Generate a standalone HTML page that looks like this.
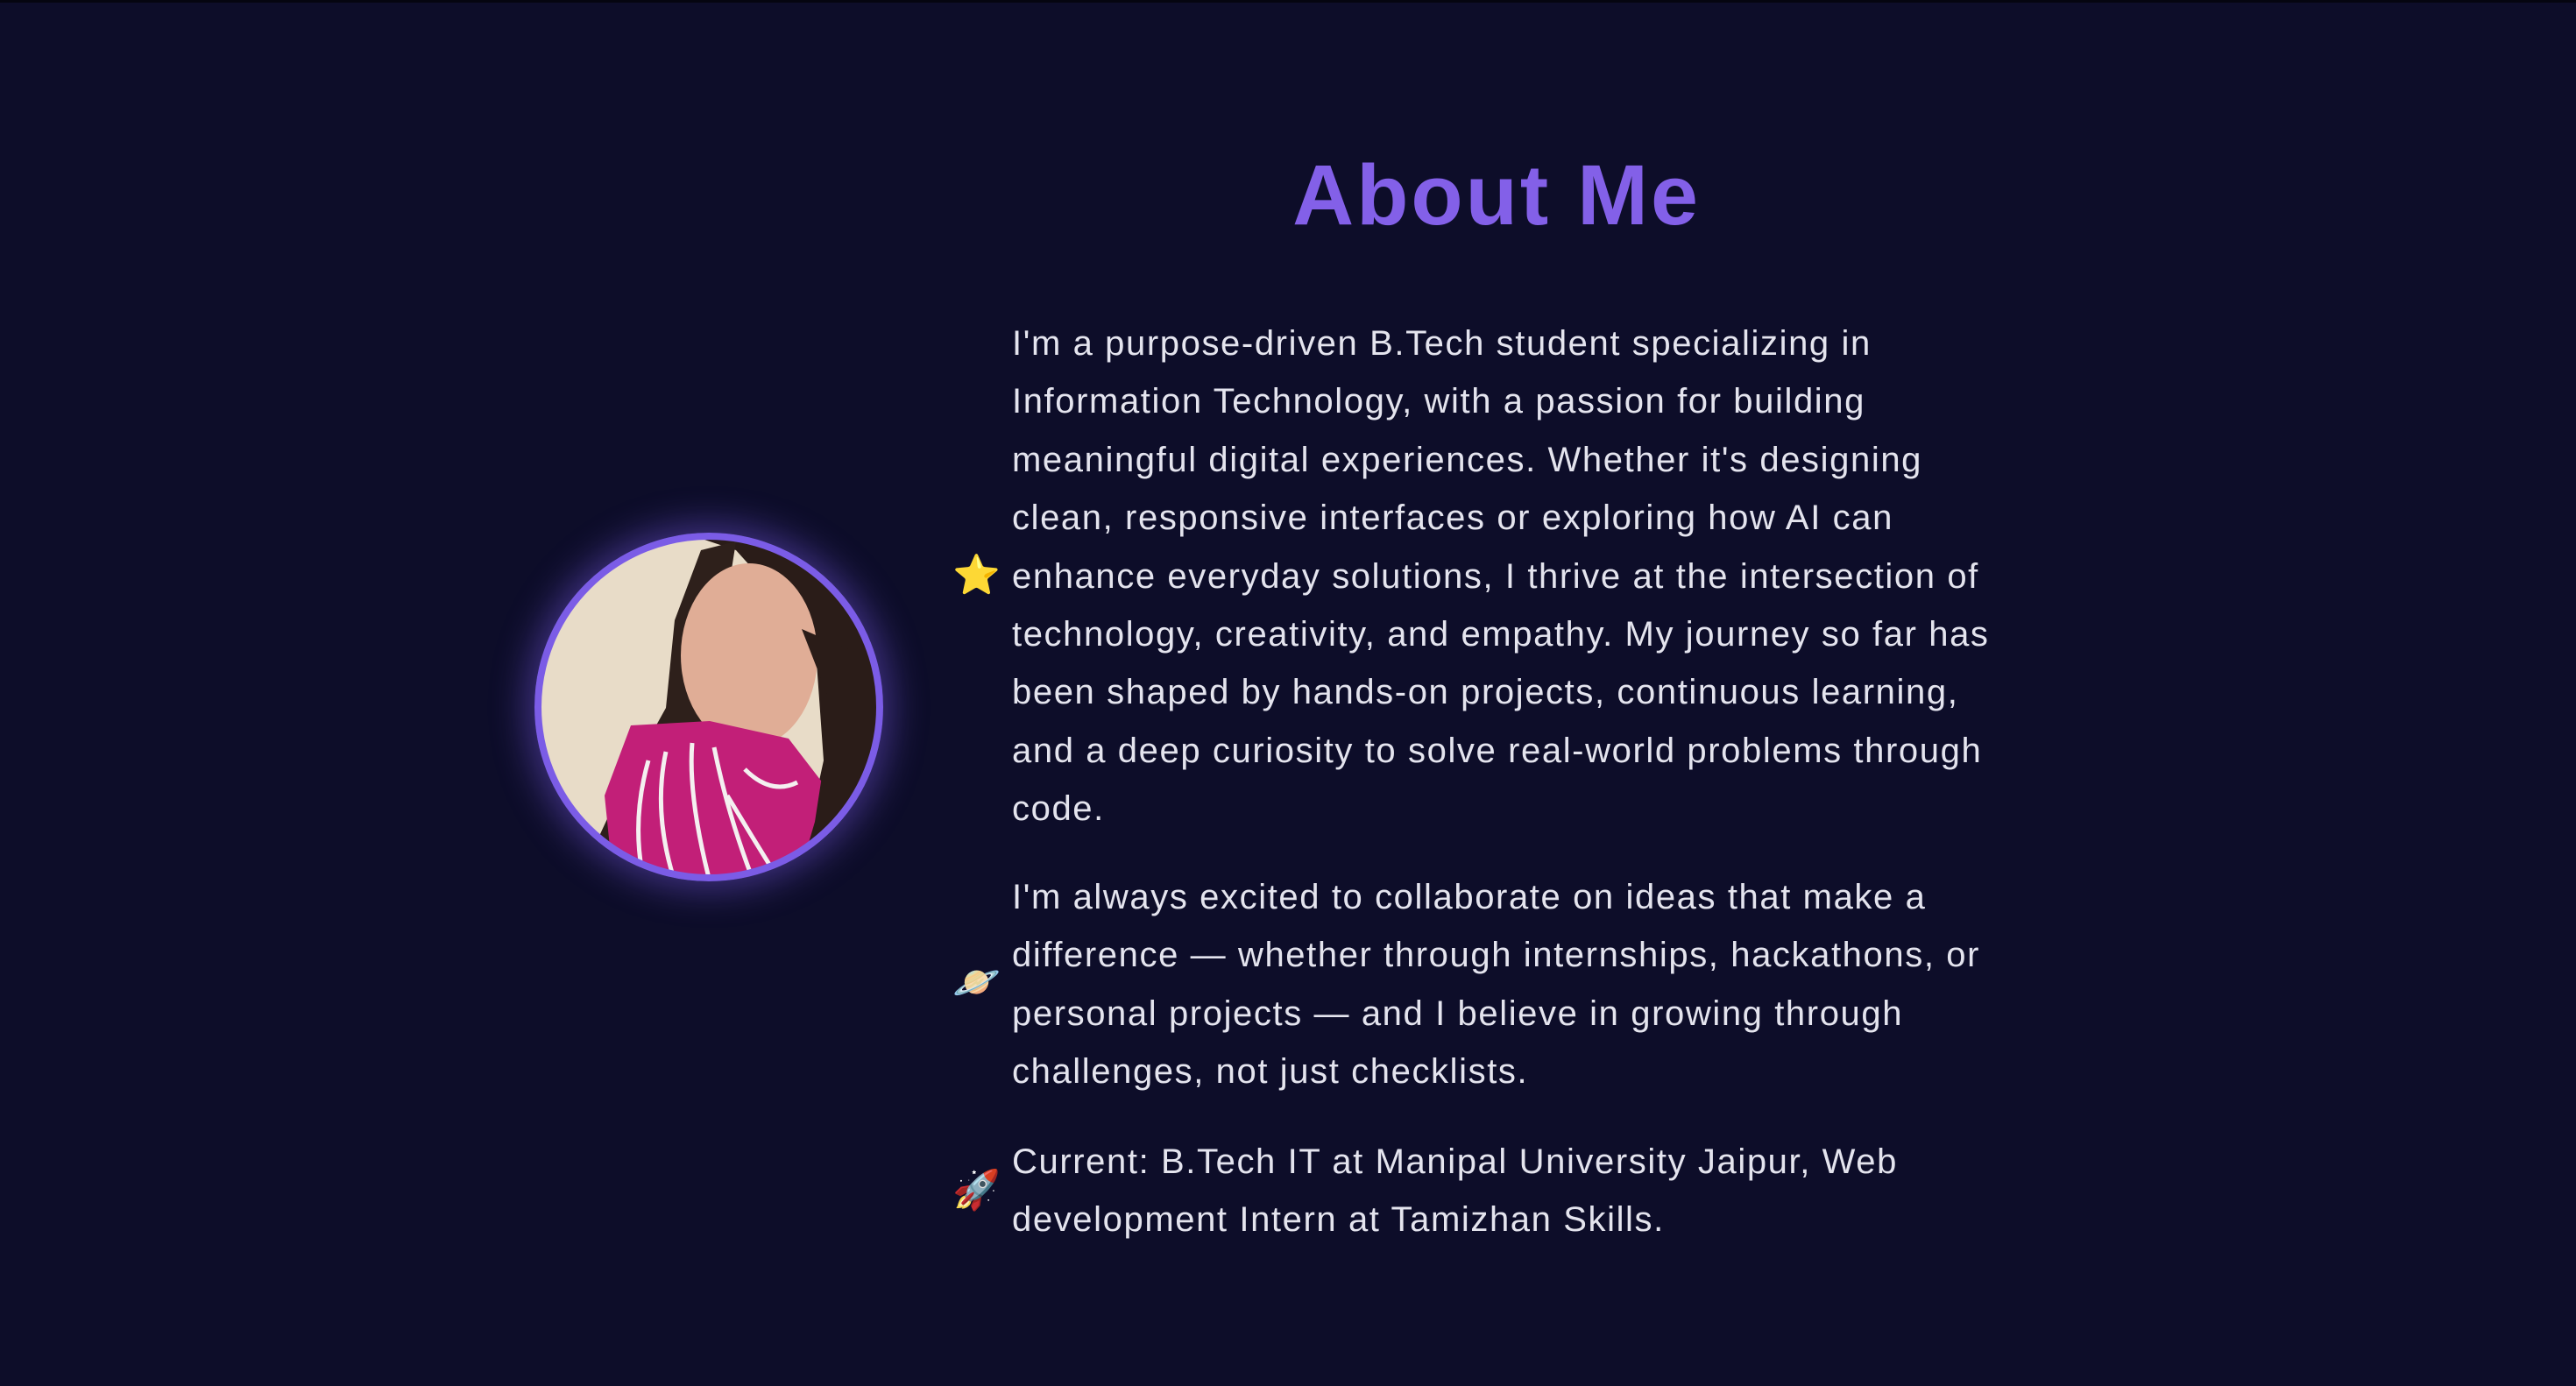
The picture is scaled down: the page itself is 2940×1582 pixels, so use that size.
<!DOCTYPE html>
<html><head><meta charset="utf-8"><style>
html,body{margin:0;padding:0;width:2940px;height:1582px;background:#0d0d29;overflow:hidden}
body{position:relative;font-family:"Liberation Sans",sans-serif}
.top{position:absolute;left:0;top:0;width:2940px;height:3px;background:#050510}
h1{position:absolute;left:0;width:3416px;top:163px;margin:0;text-align:center;font-size:97px;font-weight:bold;color:#8360e8;line-height:120px;letter-spacing:3px}
.p{position:absolute;left:1155px;color:#e4e4ee;font-size:40px;line-height:66.4px;white-space:nowrap;letter-spacing:1.6px}
.e{position:absolute;font-size:44px;line-height:50px;width:50px;text-align:center;font-family:"Noto Color Emoji","DejaVu Sans",sans-serif}
.ph{position:absolute;left:610px;top:608px;width:398px;height:398px;border-radius:50%;box-shadow:0 0 40px 10px rgba(123,92,230,0.45)}
</style></head><body>
<div class="top"></div>
<h1>About Me</h1>
<div class="ph">
<svg width="398" height="398" viewBox="0 0 398 398">
<defs><clipPath id="c"><circle cx="199" cy="199" r="192"/></clipPath></defs>
<g clip-path="url(#c)">
<rect width="398" height="398" fill="#e8dcc8"/>
<path d="M170 0 L398 0 L398 330 L360 398 L300 398 L330 260 L320 120 L230 20 Z" fill="#2a1c18"/>
<path d="M50 398 L100 290 L150 200 L160 100 L190 20 L230 10 L200 200 L160 398 Z" fill="#2e201b"/>
<ellipse cx="245" cy="140" rx="78" ry="105" fill="#e0ad96"/>
<path d="M110 220 L200 215 L290 235 L340 300 L330 398 L90 398 L80 300 Z" fill="#c21f78"/>
<g stroke="#f4f0f0" stroke-width="5" fill="none">
<path d="M180 240 Q175 300 200 398"/><path d="M205 245 Q220 320 250 398"/>
<path d="M130 260 Q110 330 125 398"/><path d="M240 270 Q270 300 300 285"/>
<path d="M150 250 Q135 320 160 398"/><path d="M220 300 Q250 350 280 398"/></g>
<path d="M305 110 L340 200 L320 330 L300 398 L370 398 L398 260 L398 150 Z" fill="#2a1c18"/>
</g>
<circle cx="199" cy="199" r="195" fill="none" stroke="#7b5ce6" stroke-width="8"/>
</svg></div>
<div class="e" style="left:1087px;top:631px">⭐</div>
<div class="e" style="left:1087px;top:1096px">🪐</div>
<div class="e" style="left:1087px;top:1333px">🚀</div>
<div class="p" style="top:359px">I'm a purpose-driven B.Tech student specializing in<br>Information Technology, with a passion for building<br>meaningful digital experiences. Whether it's designing<br>clean, responsive interfaces or exploring how AI can<br>enhance everyday solutions, I thrive at the intersection of<br>technology, creativity, and empathy. My journey so far has<br>been shaped by hands-on projects, continuous learning,<br>and a deep curiosity to solve real-world problems through<br>code.</div>
<div class="p" style="top:991px">I'm always excited to collaborate on ideas that make a<br>difference — whether through internships, hackathons, or<br>personal projects — and I believe in growing through<br>challenges, not just checklists.</div>
<div class="p" style="top:1293px">Current: B.Tech IT at Manipal University Jaipur, Web<br>development Intern at Tamizhan Skills.</div>
</body></html>
